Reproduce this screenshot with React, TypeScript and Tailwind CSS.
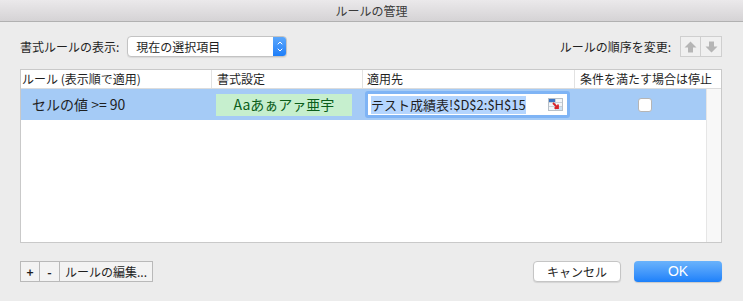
import { ChevronUp, ChevronDown } from 'lucide-react';

const jp = { fontFamily: '"Noto Sans CJK JP", "Noto Sans", sans-serif' };

const Arrow = ({ down = false }: { down?: boolean }) => (
  <svg width="13" height="12" viewBox="0 0 13 12" className={down ? 'rotate-180' : ''}>
    <path d="M6.5 0.5 L12.5 6.5 L9 6.5 L9 11.5 L4 11.5 L4 6.5 L0.5 6.5 Z" fill="#b5b5b5" />
  </svg>
);

const RangeIcon = () => (
  <svg width="15" height="13" viewBox="0 0 15 13">
    <rect x="0.5" y="0.5" width="14" height="12" fill="#f2f5f8" stroke="#b8c0c8" />
    <rect x="1" y="1" width="6" height="3" fill="#3b74c4" />
    <line x1="1" y1="4.5" x2="14" y2="4.5" stroke="#c8d0d8" />
    <line x1="1" y1="8.5" x2="14" y2="8.5" stroke="#c8d0d8" />
    <line x1="7.5" y1="1" x2="7.5" y2="12" stroke="#c8d0d8" />
    <rect x="8" y="9" width="6" height="3" fill="#cfe2f3" />
    <path d="M5 5 L10 10 M10 6.5 L10 10 L6.5 10" stroke="#d8232a" strokeWidth="1.8" fill="none" />
  </svg>
);

export default function App() {
  return (
    <div className="w-[743px] h-[301px] bg-[#ececec] flex flex-col overflow-hidden text-[12px] text-[#1f1f1f]" style={jp}>
      {/* title bar */}
      <div className="h-[22px] shrink-0 flex items-center justify-center bg-gradient-to-b from-[#ebe9eb] to-[#d5d3d5] border-b border-[#b1b1b1] text-[12px] text-[#3a3a3a]">
        ルールの管理
      </div>

      <div className="flex flex-col pl-[20px] pr-[21px] pt-[14px]">
        {/* top row */}
        <div className="flex items-center h-[21px]">
          <span className="mr-[8px]">書式ルールの表示:</span>
          <div className="w-[160px] h-[21px] flex items-center bg-white border border-[#c3c3c3] rounded-[4px] shadow-[0_1px_1px_rgba(0,0,0,0.08)] overflow-hidden">
            <span className="flex-1 pl-[8px] leading-none">現在の選択項目</span>
            <div className="w-[13px] h-full flex flex-col items-center justify-center bg-gradient-to-b from-[#5ba7fb] to-[#1c7ef9] text-white">
              <ChevronUp size={8} strokeWidth={3} className="-mb-[1px]" />
              <ChevronDown size={8} strokeWidth={3} />
            </div>
          </div>
          <span className="ml-auto mr-[9px]">ルールの順序を変更:</span>
          <div className="flex h-[21px]">
            <div className="w-[21px] h-full flex items-center justify-center border border-[#cfcfcf] bg-[#f0f0f0]">
              <Arrow />
            </div>
            <div className="w-[21px] h-full flex items-center justify-center border border-l-0 border-[#cfcfcf] bg-[#f0f0f0]">
              <Arrow down />
            </div>
          </div>
        </div>

        {/* table */}
        <div className="mt-[12px] h-[174px] bg-white border border-[#c9c9c9] flex flex-col">
          <div className="h-[19px] shrink-0 flex border-b border-[#dcdcdc] leading-none whitespace-nowrap">
            <div className="w-[191px] flex items-center pl-[1px] border-r border-[#e2e2e2]">ルール (表示順で適用)</div>
            <div className="w-[151px] flex items-center pl-[5px] border-r border-[#e2e2e2]">書式設定</div>
            <div className="w-[212px] flex items-center pl-[4px] border-r border-[#e2e2e2]">適用先</div>
            <div className="flex-1 flex items-center pl-[5px]">条件を満たす場合は停止</div>
          </div>
          <div className="flex flex-1">
            <div className="flex-1 flex flex-col">
              <div className="h-[31px] flex items-center bg-[#a5cbf6]">
                <div className="w-[191px] pl-[11px] text-[14px]">セルの値 &gt;= 90</div>
                <div className="w-[151px] pl-[4px]">
                  <div className="w-[136px] h-[22px] bg-[#c6efce] text-[#0b5e1a] flex items-center justify-center text-[14px]">
                    Aaあぁアァ亜宇
                  </div>
                </div>
                <div className="w-[212px] pl-[2px]">
                  <div className="w-[205px] h-[27px] rounded-[3px] bg-[#7fb4f5] p-[3px]">
                    <div className="h-full bg-white flex items-center pl-[3px] pr-[4px]">
                      <span className="bg-[#b4d5fe] text-[13px] leading-[18px]">テスト成績表!$D$2:$H$15</span>
                      <span className="ml-auto flex"><RangeIcon /></span>
                    </div>
                  </div>
                </div>
                <div className="flex-1 flex justify-center pl-[8px]">
                  <div className="w-[14px] h-[14px] bg-white border border-[#b5b5b5] rounded-[3px]" />
                </div>
              </div>
            </div>
            <div className="w-[15px] bg-[#f8f8f8] border-l border-[#e6e6e6]" />
          </div>
        </div>

        {/* bottom row */}
        <div className="mt-[18px] flex items-center h-[21px]">
          <div className="flex h-[21px] border border-[#b9b9b9] bg-[#f3f3f3]">
            <div className="w-[19px] flex items-center justify-center border-r border-[#b9b9b9] font-bold">+</div>
            <div className="w-[20px] flex items-center justify-center border-r border-[#b9b9b9] font-bold">-</div>
            <div className="px-[5px] flex items-center">ルールの編集...</div>
          </div>
          <button className="ml-auto w-[88px] h-[21px] flex items-center justify-center bg-white border border-[#c5c5c5] rounded-[4px] shadow-[0_1px_1px_rgba(0,0,0,0.1)]">
            キャンセル
          </button>
          <button
            className="ml-[13px] w-[88px] h-[21px] flex items-center justify-center rounded-[4px] bg-gradient-to-b from-[#6ab3fb] to-[#1b80fa] text-white text-[14px] shadow-[0_1px_1px_rgba(0,0,0,0.15)]"
            style={{ fontFamily: '"Liberation Sans", sans-serif' }}
          >
            OK
          </button>
        </div>
      </div>
    </div>
  );
}
